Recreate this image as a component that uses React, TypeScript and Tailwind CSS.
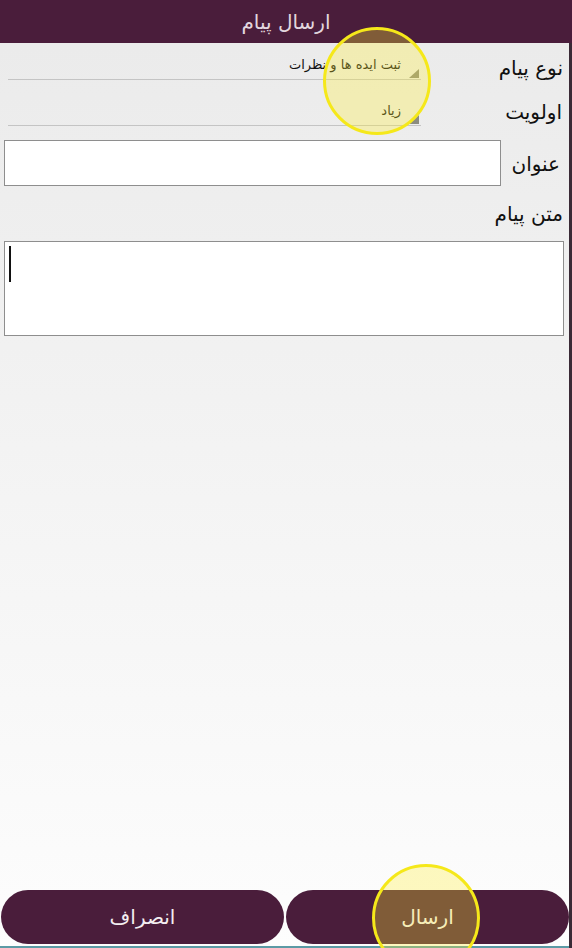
import React from 'react';

const font = { fontFamily: '"DejaVu Sans", "Noto Sans", sans-serif' };

// small gray corner arrow of an Android-style spinner
const SpinnerArrow: React.FC = () => (
	<svg className="absolute right-[2px] bottom-[1px]" width="10" height="9" viewBox="0 0 10 9">
		<polygon points="10,0 10,9 0,9" fill="#8c8c80" />
	</svg>
);

const Spinner: React.FC<{ value: string }> = ({ value }) => (
	<div className="relative ml-[8px] w-[413px] h-full border-b border-[#c4c4c4] flex items-end justify-end pr-[20px] pb-[5px]">
		<span dir="rtl" className="text-[13px] text-[#111]">
			{value}
		</span>
		<SpinnerArrow />
	</div>
);

export default function App() {
	return (
		<div className="relative w-[572px] h-[948px] overflow-hidden flex flex-col" style={font}>
			{/* toolbar */}
			<div className="h-[43px] bg-[#4a1d3b] flex items-center justify-center shrink-0">
				<span dir="rtl" className="text-[20px] text-[#e2d6de]">
					ارسال پیام
				</span>
			</div>

			<div className="flex flex-1">
				<div className="flex-1 flex flex-col bg-gradient-to-b from-[#ebebeb] to-[#fdfdfd]">
					{/* message type */}
					<div className="flex h-[37px]">
						<Spinner value="ثبت ایده ها و نظرات" />
						<div dir="rtl" className="flex-1 pr-[6px] pt-[15px] text-[20px] text-[#111] leading-none whitespace-nowrap">
							نوع پیام
						</div>
					</div>

					{/* priority */}
					<div className="flex h-[46px]">
						<Spinner value="زیاد" />
						<div dir="rtl" className="flex-1 pr-[7px] pt-[22px] text-[20px] text-[#111] leading-none whitespace-nowrap">
							اولویت
						</div>
					</div>

					{/* subject */}
					<div className="flex items-center mt-[14px] h-[46px]">
						<div className="ml-[4px] w-[497px] h-[46px] bg-white border border-[#8e8e8e]" />
						<div dir="rtl" className="flex-1 pr-[9px] pt-[2px] text-[20px] text-[#111] leading-none whitespace-nowrap">
							عنوان
						</div>
					</div>

					<div dir="rtl" className="mt-[18px] pr-[6px] text-[20px] text-[#111] leading-none">
						متن پیام
					</div>

					{/* message body */}
					<div className="mt-[17px] ml-[4px] mr-[5px] h-[95px] bg-white border border-[#8e8e8e] pl-[4px] pt-[4px]">
						<div className="w-[1.5px] h-[36px] bg-[#111]" />
					</div>

					<div className="flex-1" />

					{/* actions */}
					<div className="flex gap-[2px] pl-[1px] pb-[2px]">
						<div className="flex-1 h-[54px] rounded-full bg-[#4a1d3b] flex items-center justify-center">
							<span dir="rtl" className="text-[20px] text-[#f3eef1]">
								انصراف
							</span>
						</div>
						<div className="flex-1 h-[54px] rounded-full bg-[#4a1d3b] flex items-center justify-center">
							<span dir="rtl" className="text-[20px] text-[#f3eef1]">
								ارسال
							</span>
						</div>
					</div>
					<div className="h-[2px] bg-[#5b9aa5]" />
				</div>
				<div className="w-[3px] bg-[#3a2a36]" />
			</div>

			{/* touch indicators */}
			<div className="absolute left-[323px] top-[27px] w-[108px] h-[108px] rounded-full border-[3px] border-[#f5e81a] bg-[#ffee33]/30" />
			<div className="absolute left-[372px] top-[864px] w-[108px] h-[108px] rounded-full border-[3px] border-[#f5e81a] bg-[#ffee33]/30" />
		</div>
	);
}
